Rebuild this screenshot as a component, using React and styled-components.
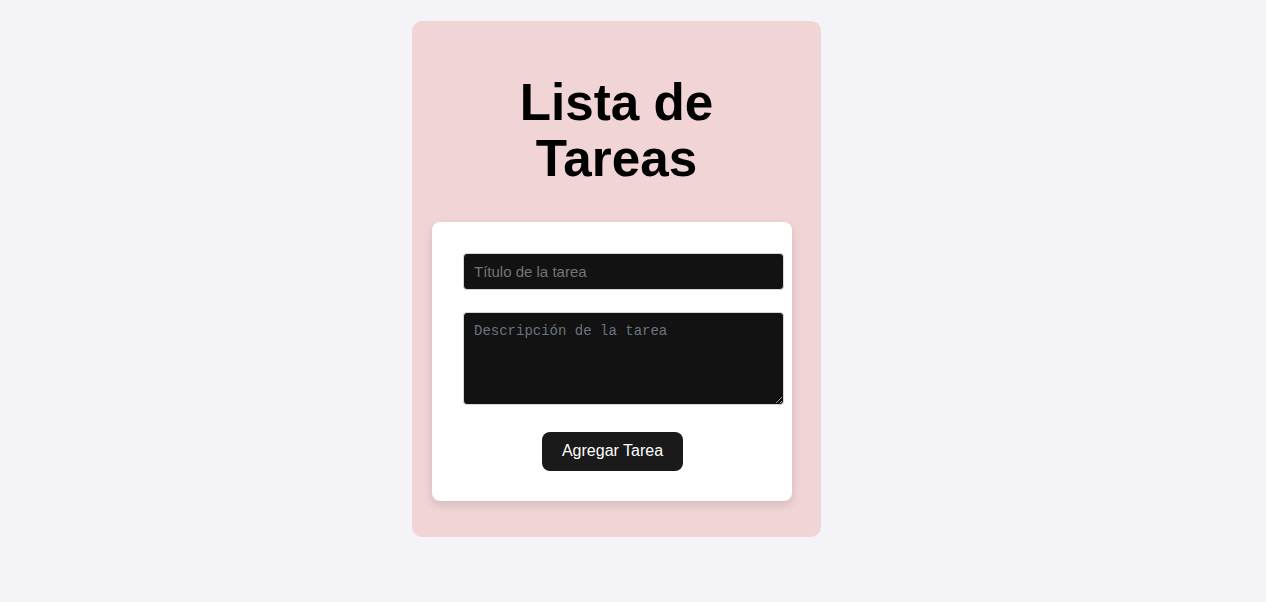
import React from "react";
import styled, { createGlobalStyle } from "styled-components";

const Global = createGlobalStyle`
  html, body { margin: 0; padding: 0; background: #f4f3f8; }
  body { font-family: "Liberation Sans", Arial, sans-serif; }
  * { box-sizing: border-box; }
`;

const Page = styled.div`
  min-height: 602px;
  padding: 21px 0 0 412px;
`;

const Panel = styled.div`
  width: 409px;
  height: 516px;
  background: #f1d4d5;
  border-radius: 10px;
  padding: 20px 29px 37px 20px;
`;

const Title = styled.h1`
  margin: 34px 0 34px 0;
  font-size: 51.2px;
  line-height: 1.1;
  font-weight: 700;
  color: #000;
  text-align: center;
  padding-left: 9px;
`;

const Card = styled.form`
  width: 360px;
  background: #fff;
  border-radius: 8px;
  box-shadow: 0 4px 10px rgba(0, 0, 0, 0.12);
  padding: 31px 8px 30px 31px;
  display: flex;
  flex-direction: column;
`;

const Field = styled.input`
  width: 321px;
  height: 37px;
  background: #121212;
  border: 1px solid #d6d6d6;
  border-radius: 4px;
  padding: 0 10px;
  font-family: "Liberation Sans", Arial, sans-serif;
  font-size: 15px;
  color: #eee;
  outline: none;
  &::placeholder { color: #757575; }
`;

const Area = styled.textarea`
  width: 321px;
  height: 93px;
  margin-top: 22px;
  background: #121212;
  border: 1px solid #d6d6d6;
  border-radius: 4px;
  padding: 10px 10px;
  font-family: "Liberation Mono", "DejaVu Sans Mono", monospace;
  font-size: 14px;
  line-height: 16px;
  color: #eee;
  outline: none;
  resize: vertical;
  &::placeholder { color: #6b7480; }
`;

const Button = styled.button`
  align-self: center;
  margin-top: 27px;
  margin-right: 22px;
  height: 39px;
  padding: 0 19.2px;
  background: #1a1a1a;
  color: #fff;
  border: 1px solid transparent;
  border-radius: 8px;
  font-family: "Liberation Sans", Arial, sans-serif;
  font-size: 16px;
  font-weight: 500;
  cursor: pointer;
`;

export default function App() {
  return (
    <>
      <Global />
      <Page>
        <Panel>
          <Title>
            Lista de
            <br />
            Tareas
          </Title>
          <Card onSubmit={(e) => e.preventDefault()}>
            <Field type="text" placeholder="Título de la tarea" />
            <Area placeholder="Descripción de la tarea" />
            <Button type="submit">Agregar Tarea</Button>
          </Card>
        </Panel>
      </Page>
    </>
  );
}
